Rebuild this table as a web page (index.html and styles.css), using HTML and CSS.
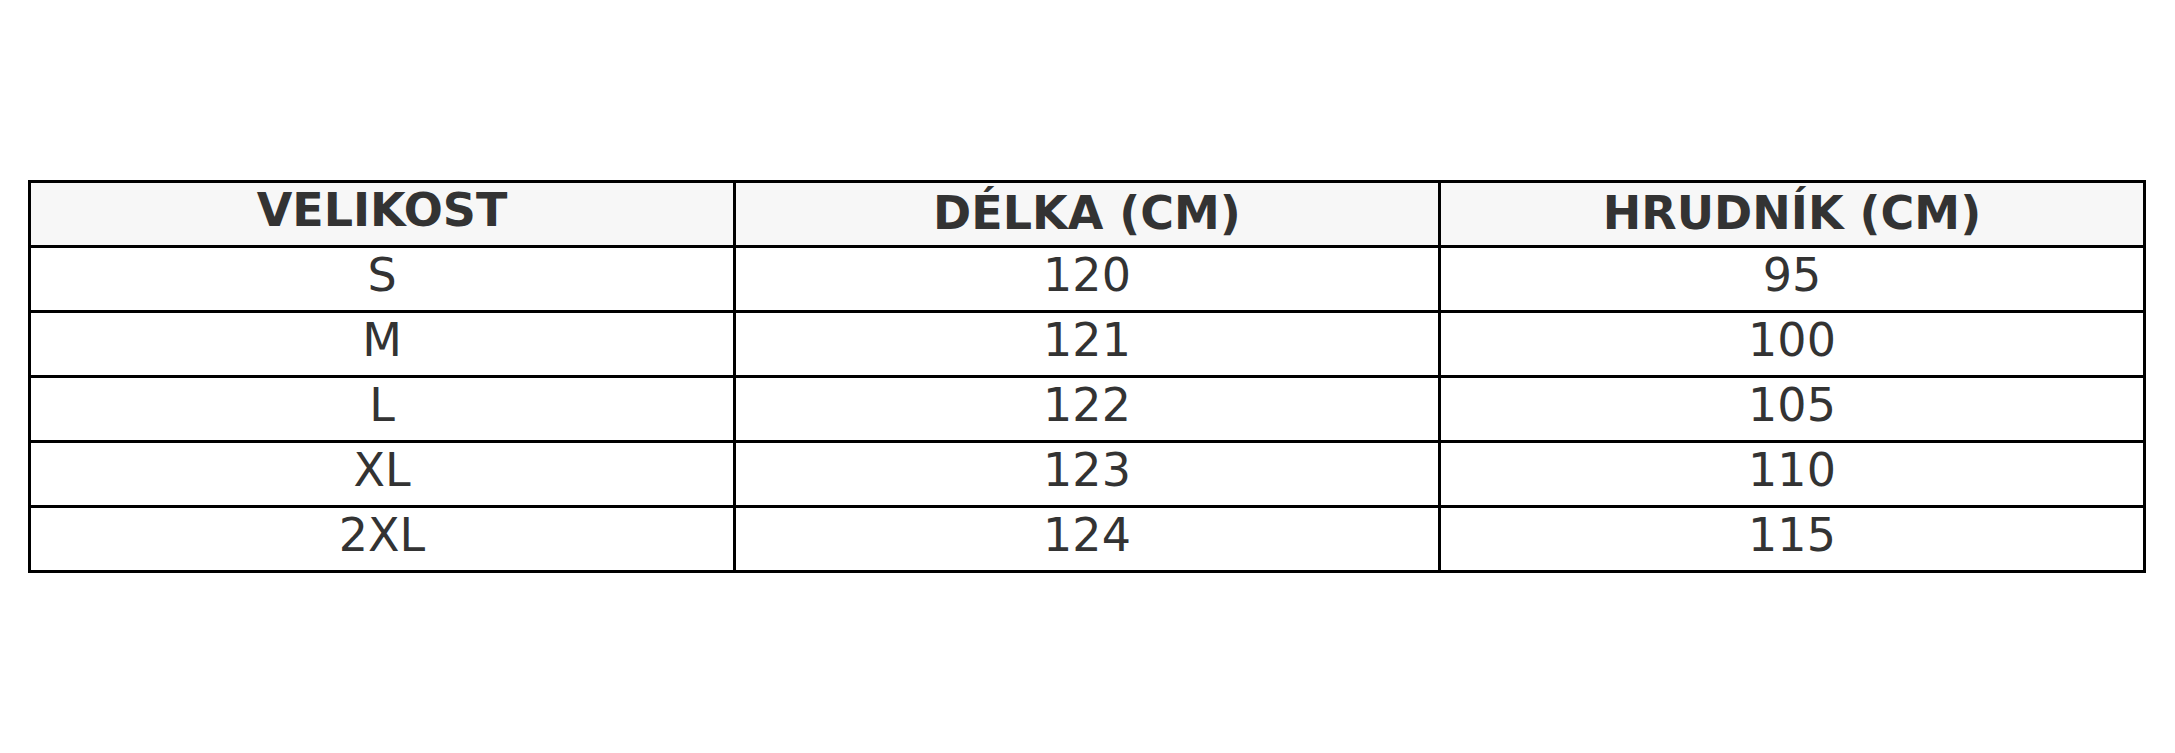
FILE: index.html
```html
<!DOCTYPE html>
<html lang="cs">
<head>
<meta charset="utf-8">
<title>Tabulka velikostí</title>
<link rel="stylesheet" href="styles.css">
</head>
<body>
<div class="size-table" role="table">
  <div class="cell head" role="columnheader">VELIKOST</div>
  <div class="cell head accent" role="columnheader">DÉLKA (CM)</div>
  <div class="cell head accent" role="columnheader">HRUDNÍK (CM)</div>

  <div class="cell" role="cell">S</div>
  <div class="cell" role="cell">120</div>
  <div class="cell" role="cell">95</div>

  <div class="cell" role="cell">M</div>
  <div class="cell" role="cell">121</div>
  <div class="cell" role="cell">100</div>

  <div class="cell" role="cell">L</div>
  <div class="cell" role="cell">122</div>
  <div class="cell" role="cell">105</div>

  <div class="cell" role="cell">XL</div>
  <div class="cell" role="cell">123</div>
  <div class="cell" role="cell">110</div>

  <div class="cell" role="cell">2XL</div>
  <div class="cell" role="cell">124</div>
  <div class="cell" role="cell">115</div>
</div>
</body>
</html>
```

FILE: styles.css
```css
html, body {
  margin: 0;
  padding: 0;
  background: #ffffff;
}

body {
  padding: 180px 0 0 28px;
  font-family: "DejaVu Sans", "Liberation Sans", sans-serif;
  color: #333333;
}

.size-table {
  display: grid;
  grid-template-columns: repeat(3, 705px);
  grid-template-rows: repeat(6, 65px);
  width: max-content;
  border-top: 3px solid #000000;
  border-left: 3px solid #000000;
}

.cell {
  box-sizing: border-box;
  border-right: 3px solid #000000;
  border-bottom: 3px solid #000000;
  padding-top: 3.6px;
  text-align: center;
  font-size: 46px;
  line-height: 46px;
  font-weight: normal;
  white-space: nowrap;
}

.head {
  background: #f7f7f7;
  font-weight: bold;
}

.head.accent {
  padding-top: 6.8px;
}
```
